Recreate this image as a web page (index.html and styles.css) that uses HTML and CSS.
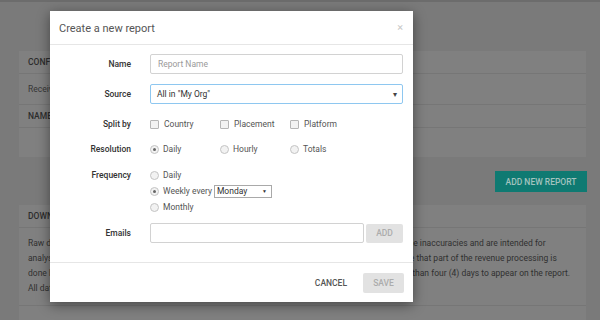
FILE: index.html
```html
<!DOCTYPE html>
<html lang="en">
<head>
  <meta charset="UTF-8" />
  <title>Reports</title>
  <link rel="stylesheet" href="styles.css">
</head>
<body>
  <div class="page">
    <div class="card">
      <div class="card-head">CONFIGURED REPORTS</div>
      <div class="card-row">Receive scheduled reports directly in your inbox.</div>
      <div class="card-head thead">NAME</div>
      <div class="card-row empty"></div>
    </div>

    <div class="actions">
      <button class="btn-primary">ADD NEW REPORT</button>
    </div>

    <div class="card">
      <div class="card-head">DOWNLOAD RAW DATA</div>
      <div class="card-text">
        Raw data reports are generated daily from the server logs of all placements and thus may contain some inaccuracies and are intended for<br>
        analysis purposes only and must not be used for billing or invoices of any kind at any time. Please note that part of the revenue processing is<br>
        done by external partners, so some of the revenue data for any given day can occasionally take longer than four (4) days to appear on the report.<br>
        All data is reported in UTC time zone.
      </div>
    </div>
    <div class="card last"></div>
  </div>

  <div class="modal">
    <div class="modal-header">
      <span class="modal-title">Create a new report</span>
      <span class="close">&times;</span>
    </div>

    <div class="modal-body">
      <div class="row r-name">
        <label class="label">Name</label>
        <input class="field" type="text" placeholder="Report Name">
      </div>
      <div class="row r-source">
        <label class="label">Source</label>
        <div class="field select-field">
          <span>All in "My Org"</span>
          <span class="caret">&#9662;</span>
        </div>
      </div>
      <div class="row r-split">
        <label class="label">Split by</label>
        <div class="options">
          <span class="opt"><i class="check"></i>Country</span>
          <span class="opt"><i class="check"></i>Placement</span>
          <span class="opt"><i class="check"></i>Platform</span>
        </div>
      </div>
      <div class="row r-res">
        <label class="label">Resolution</label>
        <div class="options">
          <span class="opt"><i class="radio on"></i>Daily</span>
          <span class="opt"><i class="radio"></i>Hourly</span>
          <span class="opt"><i class="radio"></i>Totals</span>
        </div>
      </div>
      <div class="row r-freq">
        <label class="label">Frequency</label>
        <div class="stack">
          <span class="opt"><i class="radio"></i>Daily</span>
          <span class="opt"><i class="radio on"></i>Weekly every
            <span class="mini-select">Monday<span class="mini-caret">&#9660;</span></span>
          </span>
          <span class="opt"><i class="radio"></i>Monthly</span>
        </div>
      </div>
      <div class="row r-emails">
        <label class="label">Emails</label>
        <input class="field email" type="text">
        <button class="btn-flat-grey add">ADD</button>
      </div>
    </div>

    <div class="modal-footer">
      <button class="btn-text">CANCEL</button>
      <button class="btn-flat-grey save">SAVE</button>
    </div>
  </div>
</body>
</html>
```

FILE: styles.css
```css
body {
  margin: 0;
  font-family: Roboto, 'Liberation Sans', sans-serif;
  background-color: #7a7a7a;
  border-top: 2px solid #6c6c6c;
  height: 318px;
  overflow: hidden;
}
.page {
  padding: 49px 14px 0 19px;
}
.card {
  background-color: #808080;
  color: #2c2c2c;
  font-size: 8.5px;
}
.card-head {
  height: 22px;
  line-height: 22px;
  padding: 0 9px;
  font-weight: 500;
  border-bottom: 1px solid #767676;
}
.card-row {
  height: 30px;
  line-height: 31px;
  padding: 0 9px;
  color: #363636;
  border-bottom: 1px solid #767676;
}
.card-row.empty {
  height: 29px;
  border-bottom: none;
}
.actions {
  display: flex;
  justify-content: flex-end;
  margin: 14px -1px 13px 0;
}
.btn-primary {
  background-color: #0f7a72;
  color: #a3c3bf;
  border: none;
  height: 21px;
  width: 92px;
  font-family: Roboto, sans-serif;
  font-weight: 500;
  font-size: 8.5px;
  padding: 0;
}
.card-text {
  padding: 8px 9px 9px;
  line-height: 15px;
  color: #303030;
  border-bottom: 1px solid #767676;
  white-space: nowrap;
  overflow: hidden;
}
.card.last {
  height: 20px;
}

/* modal */
.modal {
  position: absolute;
  left: 50px;
  top: 11px;
  width: 363px;
  height: 291px;
  background: #fff;
  box-shadow: 0 3px 12px rgba(0,0,0,0.45);
  color: #333;
}
.modal-header {
  height: 33px;
  display: flex;
  align-items: center;
  justify-content: space-between;
  padding: 0 9px;
  border-bottom: 1px solid #e6e6e6;
}
.modal-title {
  font-size: 11px;
  color: #555;
  margin-top: 1px;
}
.close {
  color: #c8c8c8;
  font-size: 11px;
  margin-right: 1px;
}
.modal-body {
  padding: 9px 10px 0 0;
  height: 218px;
  box-sizing: border-box;
  border-bottom: 1px solid #e6e6e6;
}
.row {
  display: flex;
  align-items: center;
  font-size: 8.5px;
}
.label {
  width: 81px;
  text-align: right;
  font-weight: 500;
  color: #333;
  margin-right: 19px;
  flex-shrink: 0;
}
.r-name, .r-source { height: 20px; margin-bottom: 10px; }
.r-source { margin-bottom: 13px; }
.r-split, .r-res { height: 14px; margin-bottom: 11px; }
.r-freq { align-items: flex-start; margin-bottom: 8px; }
.r-freq .label { line-height: 16px; }
.r-emails { height: 20px; }

.field {
  flex: 1;
  height: 20px;
  box-sizing: border-box;
  border: 1px solid #d2d2d2;
  border-radius: 2px;
  padding: 0 7px;
  font-family: Roboto, sans-serif;
  font-size: 8.5px;
  color: #333;
  outline: none;
}
.field::placeholder { color: #9a9a9a; }
.select-field {
  display: flex;
  align-items: center;
  justify-content: space-between;
  border-color: #8ec7f0;
  padding: 0 5px 0 6px;
}
.caret { font-size: 8px; color: #444; }

.options {
  display: flex;
}
.opt {
  display: flex;
  align-items: center;
  width: 70px;
  color: #555;
  white-space: nowrap;
}
.check, .radio {
  border: 1px solid #b5b5b5;
  background: #f2f2f2;
  flex-shrink: 0;
}
.check {
  width: 7px;
  height: 7px;
  border-radius: 1px;
  margin-right: 5px;
}
.radio {
  width: 7px;
  height: 7px;
  border-radius: 50%;
  border-color: #c4c4c4;
  margin-right: 4px;
  position: relative;
}
.radio.on::after {
  content: '';
  position: absolute;
  left: 2px;
  top: 2px;
  width: 3px;
  height: 3px;
  border-radius: 50%;
  background: #666;
}
.stack {
  display: flex;
  flex-direction: column;
}
.stack .opt {
  height: 16px;
  width: auto;
}
.mini-select {
  display: inline-flex;
  align-items: center;
  justify-content: space-between;
  width: 58px;
  height: 13px;
  box-sizing: border-box;
  border: 1px solid #a9a9a9;
  margin-left: 2px;
  padding: 0 4px 0 2px;
  color: #333;
}
.mini-caret { font-size: 5px; }

.email { flex: none; width: 214px; }
.btn-flat-grey {
  background: #e2e2e2;
  color: #acacac;
  border: none;
  border-radius: 2px;
  font-family: Roboto, sans-serif;
  font-size: 8.5px;
  font-weight: 500;
  padding: 0;
}
.add {
  width: 38px;
  height: 19px;
  margin-left: 2px;
}
.modal-footer {
  display: flex;
  justify-content: flex-end;
  align-items: center;
  height: 39px;
  padding: 0 9px;
}
.btn-text {
  background: none;
  border: none;
  font-family: Roboto, sans-serif;
  font-size: 8.5px;
  font-weight: 500;
  color: #555;
  margin-right: 10px;
}
.save {
  width: 41px;
  height: 20px;
}
```
